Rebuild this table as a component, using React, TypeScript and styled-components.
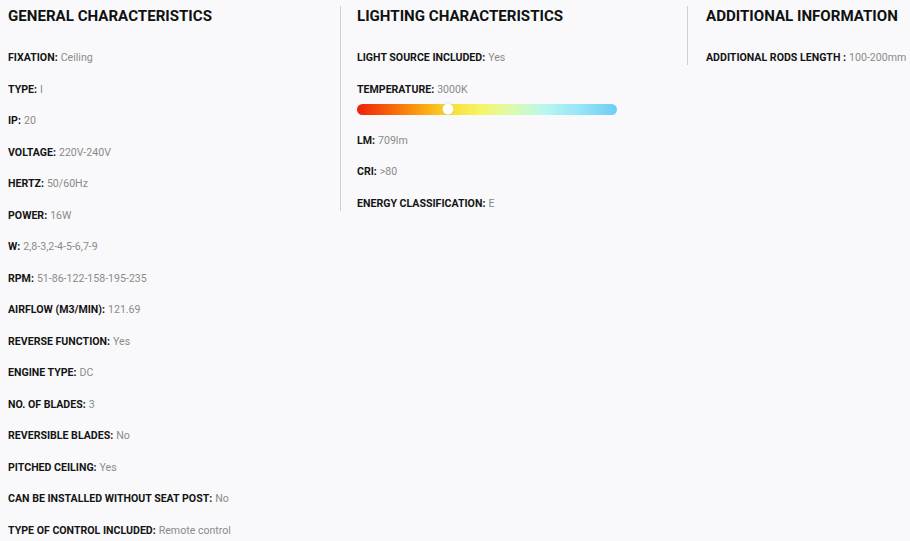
import React from "react";
import styled, { createGlobalStyle } from "styled-components";

const Global = createGlobalStyle`
  html, body { margin: 0; padding: 0; background: #f9f9fb; }
  body { font-family: Roboto, "Liberation Sans", Arial, sans-serif; }
`;

const Page = styled.div`
  display: grid;
  grid-template-columns: 332px 347px 1fr;
  padding: 6px 0 0 8px;
  height: 541px;
  box-sizing: border-box;
  overflow: hidden;
`;

const Column = styled.section<{ $sep?: boolean; $pad?: number }>`
  align-self: start;
  padding-left: ${(p) => p.$pad ?? 0}px;
  border-left: ${(p) => (p.$sep ? "1px solid #cfcfd3" : "none")};
`;

const Title = styled.h2`
  margin: 0 0 16px;
  font-size: 15.1px;
  font-weight: 700;
  color: #111;
  line-height: 20px;
  height: 20px;
`;

const Row = styled.div`
  font-size: 10.6px;
  line-height: 13px;
  padding: 9px 0 9.5px;
  white-space: nowrap;
  &:last-child {
    padding-bottom: 1px;
  }
`;

const Label = styled.span`
  font-weight: 700;
  color: #141414;
`;

const Value = styled.span`
  color: #8a8a8a;
  margin-left: 3px;
`;

const BarWrap = styled.div`
  position: relative;
  width: 260px;
  height: 11px;
  margin: -1.5px 0 10px;
`;

const Bar = styled.div`
  width: 100%;
  height: 100%;
  border-radius: 6px;
  background: linear-gradient(
    90deg,
    #f01f0a 0%,
    #f86a0a 14%,
    #fbb415 28%,
    #f7e13a 37%,
    #f6f56a 48%,
    #dafbb0 60%,
    #b8f7ee 72%,
    #98e6f8 85%,
    #6fcdf2 100%
  );
`;

const Thumb = styled.div`
  position: absolute;
  top: 50%;
  width: 11px;
  height: 11px;
  border-radius: 50%;
  background: #fff;
  transform: translate(-50%, -50%);
  box-shadow: 0 0 2px rgba(0, 0, 0, 0.15);
`;

type Item = [string, string];

const general: Item[] = [
  ["FIXATION:", "Ceiling"],
  ["TYPE:", "I"],
  ["IP:", "20"],
  ["VOLTAGE:", "220V-240V"],
  ["HERTZ:", "50/60Hz"],
  ["POWER:", "16W"],
  ["W:", "2,8-3,2-4-5-6,7-9"],
  ["RPM:", "51-86-122-158-195-235"],
  ["AIRFLOW (M3/MIN):", "121.69"],
  ["REVERSE FUNCTION:", "Yes"],
  ["ENGINE TYPE:", "DC"],
  ["NO. OF BLADES:", "3"],
  ["REVERSIBLE BLADES:", "No"],
  ["PITCHED CEILING:", "Yes"],
  ["CAN BE INSTALLED WITHOUT SEAT POST:", "No"],
  ["TYPE OF CONTROL INCLUDED:", "Remote control"],
];

const lightingTop: Item[] = [
  ["LIGHT SOURCE INCLUDED:", "Yes"],
  ["TEMPERATURE:", "3000K"],
];
const lightingBottom: Item[] = [
  ["LM:", "709lm"],
  ["CRI:", ">80"],
  ["ENERGY CLASSIFICATION:", "E"],
];

const Rows = ({ items }: { items: Item[] }) => (
  <>
    {items.map(([l, v]) => (
      <Row key={l}>
        <Label>{l}</Label>
        <Value>{v}</Value>
      </Row>
    ))}
  </>
);

export default function App() {
  const temp = 35;
  return (
    <>
      <Global />
      <Page>
        <Column>
          <Title>GENERAL CHARACTERISTICS</Title>
          <Rows items={general} />
        </Column>
        <Column $sep $pad={16}>
          <Title>LIGHTING CHARACTERISTICS</Title>
          <Rows items={lightingTop} />
          <BarWrap>
            <Bar />
            <Thumb style={{ left: `${temp}%` }} />
          </BarWrap>
          <Rows items={lightingBottom} />
        </Column>
        <Column $sep $pad={18}>
          <Title>ADDITIONAL INFORMATION</Title>
          <Rows items={[["ADDITIONAL RODS LENGTH :", "100-200mm"]]} />
        </Column>
      </Page>
    </>
  );
}
